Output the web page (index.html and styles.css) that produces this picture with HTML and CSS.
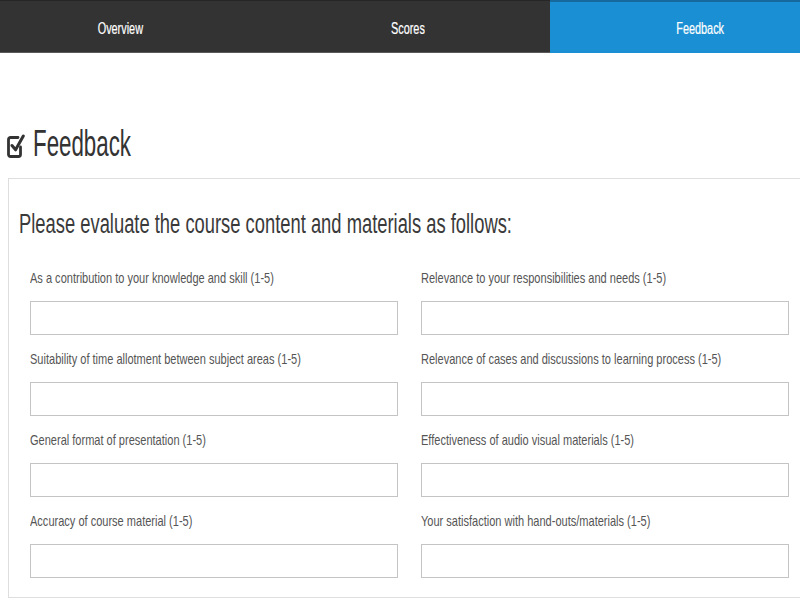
FILE: index.html
```html
<!DOCTYPE html>
<html lang="en">
<head>
<meta charset="utf-8">
<title>Feedback</title>
<link rel="stylesheet" href="styles.css">
</head>
<body>
<nav class="tabs">
  <a class="tab tab-overview"><span class="sq sq-c">Overview</span></a>
  <a class="tab tab-scores"><span class="sq sq-c">Scores</span></a>
  <a class="tab tab-feedback active"><span class="sq sq-c">Feedback</span></a>
</nav>
<main class="main">
  <h1 class="page-title">
    <svg class="check-icon" width="18" height="26" viewBox="0 0 18 26" aria-hidden="true">
      <path d="M13.5 14v7.5a2 2 0 0 1-2 2h-8a2 2 0 0 1-2-2v-15a2 2 0 0 1 2-2h7.5" fill="none" stroke="#333" stroke-width="2.8" stroke-linecap="round" stroke-linejoin="round"/>
      <path d="M5 12.5l3.6 4.3L16.3 3" fill="none" stroke="#333" stroke-width="3" stroke-linecap="round" stroke-linejoin="round"/>
    </svg>
    <span class="sq sq-title">Feedback</span>
  </h1>
  <section class="card">
    <h2 class="card-title"><span class="sq sq-h2">Please evaluate the course content and materials as follows:</span></h2>
    <div class="fields">
      <div class="field"><label class="label"><span class="sq">As a contribution to your knowledge and skill (1-5)</span></label><input class="input" type="text"></div>
      <div class="field"><label class="label"><span class="sq">Relevance to your responsibilities and needs (1-5)</span></label><input class="input" type="text"></div>
      <div class="field"><label class="label"><span class="sq">Suitability of time allotment between subject areas (1-5)</span></label><input class="input" type="text"></div>
      <div class="field"><label class="label"><span class="sq">Relevance of cases and discussions to learning process (1-5)</span></label><input class="input" type="text"></div>
      <div class="field"><label class="label"><span class="sq">General format of presentation (1-5)</span></label><input class="input" type="text"></div>
      <div class="field"><label class="label"><span class="sq">Effectiveness of audio visual materials (1-5)</span></label><input class="input" type="text"></div>
      <div class="field"><label class="label"><span class="sq">Accuracy of course material (1-5)</span></label><input class="input" type="text"></div>
      <div class="field"><label class="label"><span class="sq">Your satisfaction with hand-outs/materials (1-5)</span></label><input class="input" type="text"></div>
    </div>
  </section>
</main>
</body>
</html>
```
FILE: styles.css
```css
html {
  overflow: hidden;
  background: #fff;
}
body {
  margin: 0;
  width: 800px;
  overflow: hidden;
  font-family: "Liberation Sans", Arial, sans-serif;
  color: #333;
}
.sq {
  display: inline-block;
  white-space: nowrap;
  transform: scaleX(0.735);
  transform-origin: left center;
}
.sq-c {
  transform: scaleX(0.68);
  transform-origin: center center;
}
.sq-title {
  transform: scaleX(0.62);
}
.sq-h2 {
  transform: scaleX(0.68);
}

/* tabs */
.tabs {
  display: flex;
  height: 53px;
  background: #333;
  border-top: 1px solid #262626;
  box-sizing: border-box;
  border-bottom: 1px solid #5a5a5a;
}
.tab {
  display: flex;
  justify-content: center;
  padding-top: 4px;
  line-height: 48px;
  font-size: 16px;
  color: #fff;
  text-decoration: none;
  flex: none;
  box-sizing: border-box;
  -webkit-text-stroke: 0.2px #fff;
}
.tab-overview {
  width: 240px;
}
.tab-scores {
  width: 310px;
  padding-left: 26px;
}
.tab-feedback {
  width: 250px;
  padding-left: 50px;
}
.tab.active {
  background: #1a8fd3;
  margin-top: -1px;
  margin-bottom: -1px;
  border-top: 2px solid #16699c;
  padding-top: 3px;
}

/* main */
.main {
  padding: 0 0 0 8px;
}
.page-title {
  display: flex;
  align-items: center;
  gap: 8px;
  margin: 71px 0 14px 0;
  height: 40px;
  line-height: 40px;
  font-size: 36px;
  font-weight: normal;
  color: #333;
}
.check-icon {
  flex: none;
  margin-left: -1px;
  margin-top: 3px;
}

.card {
  border: 1px solid #dedede;
  border-right: 0;
  padding: 0 0 19px 0;
}
.card-title {
  margin: 29px 0 0 10px;
  line-height: 32px;
  font-size: 27px;
  font-weight: normal;
  color: #3a3a3a;
}
.fields {
  display: grid;
  grid-template-columns: 368px 368px;
  column-gap: 23px;
  row-gap: 14px;
  margin-top: 28px;
  padding-left: 21px;
}
.field {
  display: flex;
  flex-direction: column;
}
.label {
  display: block;
  height: 20px;
  line-height: 20px;
  font-size: 15px;
  color: #555;
  margin-bottom: 13px;
}
.input {
  display: block;
  box-sizing: border-box;
  width: 368px;
  height: 34px;
  margin: 0;
  border: 1px solid #c4c4c4;
  background: #fff;
  padding: 4px 8px;
  font: inherit;
}
```
